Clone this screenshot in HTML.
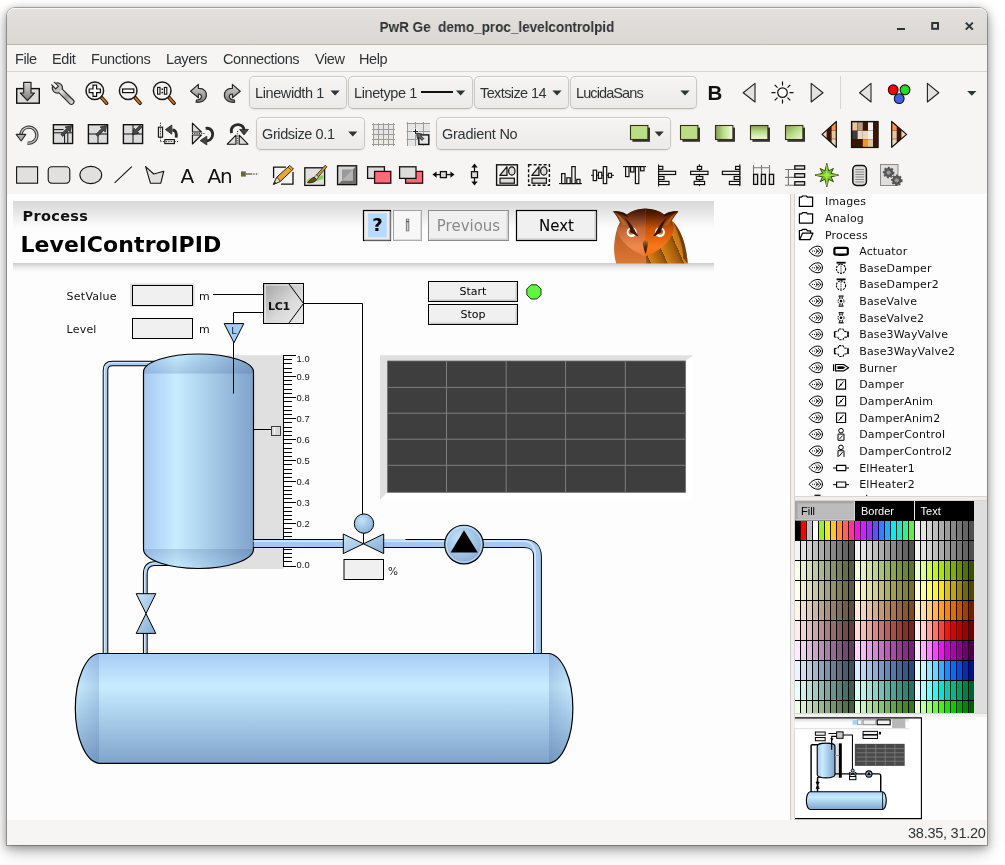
<!DOCTYPE html>
<html lang="en">
<head>
<meta charset="utf-8">
<title>PwR Ge demo_proc_levelcontrolpid</title>
<style>
html,body{margin:0;padding:0}
body{width:1005px;height:865px;overflow:hidden;background:#fff;position:relative;font-family:"Liberation Sans","DejaVu Sans",sans-serif;color:#2e3436}
.abs{position:absolute}
#win{position:absolute;left:7px;top:8px;width:980px;height:837px;background:#f6f5f4;border-radius:8px 8px 0 0;box-shadow:0 0 0 1px rgba(0,0,0,.27),0 2px 9px 1px rgba(0,0,0,.32),0 7px 18px 0 rgba(0,0,0,.22)}
#title{position:absolute;left:7px;top:8px;width:980px;height:36px;border-radius:8px 8px 0 0;background:linear-gradient(#e3e0dd,#dbd7d3);border-bottom:1px solid #bdb6af;box-shadow:inset 0 1px rgba(255,255,255,.75)}
#title span{position:absolute;left:0;right:0;top:9.5px;text-align:center;font-weight:bold;font-size:15px;line-height:18px;white-space:pre;color:#2e3436;transform:scaleX(.9)}
#menubar{position:absolute;left:7px;top:45px;width:980px;height:26px;background:#f6f5f4;border-bottom:1px solid #dad6d2}
.mi{position:absolute;top:50px;font-size:14.5px;line-height:18px;letter-spacing:-.4px;white-space:pre;color:#2e3436}
.btn{position:absolute;height:31px;border:1px solid #cdc7c2;border-bottom-color:#bfb8b1;border-radius:5px;background:linear-gradient(to top,#edebe9 2px,#f6f5f4);box-shadow:inset 0 1px rgba(255,255,255,.8),0 1px 2px rgba(0,0,0,.07)}
.bt{position:absolute;font-size:14.5px;line-height:18px;letter-spacing:-.4px;white-space:pre;color:#2e3436}
#canvasbg{position:absolute;left:7px;top:194px;width:783px;height:626px;background:#fdfdfd}
#vsep{position:absolute;left:790px;top:194px;width:3px;height:626px;background:#f1efed;border-left:1px solid #cfcac5;border-right:1px solid #d9d5d1}
#tree{position:absolute;left:795px;top:194px;width:192px;height:302px;background:#fdfdfd;overflow:hidden}
#hsep1{position:absolute;left:795px;top:496px;width:192px;height:3px;background:#f1efed;border-top:1px solid #d9d5d1;border-bottom:1px solid #d9d5d1}
#palbg{position:absolute;left:795px;top:501px;width:192px;height:212px;background:#dedede}
#hsep2{position:absolute;left:795px;top:713px;width:192px;height:3px;background:#f4f2f0;border-top:1px solid #d9d5d1;border-bottom:1px solid #e4e1de}
#navbg{position:absolute;left:795px;top:717px;width:192px;height:103px;background:#fdfdfd}
#status{position:absolute;left:7px;top:820px;width:980px;height:25px;background:#f6f5f4}
#status span{position:absolute;right:1px;top:4px;font-size:14.5px;line-height:18px;letter-spacing:-.25px;white-space:pre;color:#2e3436}
svg{position:absolute;left:0;top:0;will-change:transform}
.mi,.bt,#title span,#status span{will-change:transform}
svg text{font-family:"DejaVu Sans","Liberation Sans",sans-serif}
svg text.ls,svg .ls text{font-family:"Liberation Sans","DejaVu Sans",sans-serif}
svg .crisp{shape-rendering:crispEdges}
</style>
</head>
<body>
<div id="win"></div>
<div id="title"><span>PwR Ge  demo_proc_levelcontrolpid</span></div>
<div id="menubar"></div>
<div class="mi" style="left:15px">File</div>
<div class="mi" style="left:52px">Edit</div>
<div class="mi" style="left:91px">Functions</div>
<div class="mi" style="left:166px">Layers</div>
<div class="mi" style="left:223px">Connections</div>
<div class="mi" style="left:315px">View</div>
<div class="mi" style="left:359px">Help</div>
<div class="btn" style="left:249px;top:76px;width:96px"></div>
<div class="btn" style="left:348px;top:76px;width:122.5px"></div>
<div class="btn" style="left:474px;top:76px;width:92.5px"></div>
<div class="btn" style="left:570px;top:76px;width:125px"></div>
<div class="btn" style="left:256px;top:117px;width:106.6px"></div>
<div class="btn" style="left:436px;top:117px;width:233px"></div>
<div class="bt" style="left:255px;top:84px">Linewidth 1</div>
<div class="bt" style="left:354px;top:84px">Linetype 1</div>
<div class="bt" style="left:480px;top:84px;letter-spacing:-.6px">Textsize 14</div>
<div class="bt" style="left:576px;top:84px;letter-spacing:-.9px">LucidaSans</div>
<div class="bt" style="left:262px;top:125px">Gridsize 0.1</div>
<div class="bt" style="left:442px;top:125px;letter-spacing:-.25px">Gradient No</div>
<div id="canvasbg"></div>
<div id="vsep"></div>
<div id="tree"></div>
<div id="hsep1"></div>
<div id="palbg"></div>
<div id="hsep2"></div>
<div id="navbg"></div>
<div id="status"><span>38.35, 31.20</span></div>
<svg width="1005" height="865" viewBox="0 0 1005 865">
<defs>
<linearGradient id="gArrow" x1="0" y1="0" x2="0" y2="1"><stop offset="0" stop-color="#d8d8d8"/><stop offset="1" stop-color="#7a7a7a"/></linearGradient>
<linearGradient id="gWr" x1="0" y1="0" x2="1" y2="1"><stop offset="0" stop-color="#e8e8e8"/><stop offset=".5" stop-color="#9a9a9a"/><stop offset="1" stop-color="#d0d0d0"/></linearGradient>
<linearGradient id="gGreenH" x1="0" y1="0" x2="1" y2="0"><stop offset="0" stop-color="#7f9e55"/><stop offset=".45" stop-color="#b9de86"/><stop offset="1" stop-color="#f4fbe8"/></linearGradient>
<linearGradient id="gGreenV" x1="0" y1="0" x2="0" y2="1"><stop offset="0" stop-color="#7f9e55"/><stop offset=".45" stop-color="#b9de86"/><stop offset="1" stop-color="#f4fbe8"/></linearGradient>
<linearGradient id="gGreenD" x1="0" y1="0" x2="1" y2="1"><stop offset="0" stop-color="#7f9e55"/><stop offset=".5" stop-color="#b9de86"/><stop offset="1" stop-color="#eef8dc"/></linearGradient>
<filter id="sh" x="-20%" y="-20%" width="150%" height="150%"><feGaussianBlur stdDeviation=".6"/></filter>
</defs>
<!-- ===== ROW 1 ===== -->
<!-- save/import -->
<g>
<rect x="16.7" y="88.6" width="22.6" height="14.6" fill="#dcdcdc" stroke="#111" stroke-width="1.4"/>
<path d="M23.7 82.3H31V93h3.4l-7 7.6-7-7.6h3.3z" fill="url(#gArrow)" stroke="#222" stroke-width="1.2" stroke-linejoin="round"/>
</g>
<!-- wrench -->
<g>
<path d="M61 91.4L71.4 101.8" stroke="#2a2a2a" stroke-width="6.2" stroke-linecap="round" fill="none"/>
<circle cx="57.4" cy="88" r="5.7" fill="#2a2a2a"/>
<path d="M61 91.4L71.4 101.8" stroke="url(#gWr)" stroke-width="4" stroke-linecap="round" fill="none"/>
<circle cx="57.4" cy="88" r="4.5" fill="#c2c2c2"/>
<path d="M58.6 86L53.3 80.7L50.2 83.8L55.5 89.1z" fill="#f6f5f4"/>
<path d="M53.9 81.9L58.4 86.2L55.7 88.9L51.4 84.5" fill="none" stroke="#2a2a2a" stroke-width="1.1"/>
</g>
<!-- zoom in -->
<g>
<path d="M101.3 97.3 L106.6 103.2" stroke="#1a1a1a" stroke-width="3.6" stroke-linecap="round"/>
<path d="M101.8 97.8 L106.4 103" stroke="#e8720c" stroke-width="1.8" stroke-linecap="round"/>
<circle cx="94.8" cy="90.8" r="8.8" fill="#f4f4f4" stroke="#1a1a1a" stroke-width="1.5"/>
<path d="M93 85.2h3.6v3.8h3.8v3.6h-3.8v3.8H93v-3.8h-3.8V89H93z" fill="#fff" stroke="#111" stroke-width="1.2"/>
</g>
<!-- zoom out -->
<g>
<path d="M134.8 97.3 L140.1 103.2" stroke="#1a1a1a" stroke-width="3.6" stroke-linecap="round"/>
<path d="M135.3 97.8 L139.9 103" stroke="#e8720c" stroke-width="1.8" stroke-linecap="round"/>
<circle cx="128.2" cy="90.8" r="8.8" fill="#f4f4f4" stroke="#1a1a1a" stroke-width="1.5"/>
<rect x="122.6" y="89" width="11.2" height="3.6" fill="#fff" stroke="#111" stroke-width="1.2"/>
</g>
<!-- zoom reset -->
<g>
<path d="M168.8 97.3 L174.1 103.2" stroke="#1a1a1a" stroke-width="3.6" stroke-linecap="round"/>
<path d="M169.3 97.8 L173.9 103" stroke="#e8720c" stroke-width="1.8" stroke-linecap="round"/>
<circle cx="162.2" cy="90.8" r="8.8" fill="#f4f4f4" stroke="#1a1a1a" stroke-width="1.5"/>
<rect x="157.6" y="87.4" width="2.4" height="6.8" fill="#fff" stroke="#111" stroke-width="1.1"/>
<rect x="164.4" y="87.4" width="2.4" height="6.8" fill="#fff" stroke="#111" stroke-width="1.1"/>
<rect x="161.5" y="88.4" width="1.4" height="1.6" fill="#111"/><rect x="161.5" y="91.8" width="1.4" height="1.6" fill="#111"/>
</g>
<!-- undo -->
<path d="M190.6 91.2 L198.4 84.4 V88.4 C204.4 88.2 207 92 206.4 96.2 C205.8 100.4 201.4 102.8 196.2 102.2 L196.4 100 C199.4 100 201.4 98.6 201.4 96.6 C201.4 94.8 200.2 94 198.4 94 V97.8 Z" fill="url(#gArrow)" stroke="#2a2a2a" stroke-width="1.2" stroke-linejoin="round"/>
<!-- redo -->
<path d="M240.2 91.2 L232.4 84.4 V88.4 C226.4 88.2 223.8 92 224.4 96.2 C225 100.4 229.4 102.8 234.6 102.2 L234.4 100 C231.4 100 229.4 98.6 229.4 96.6 C229.4 94.8 230.6 94 232.4 94 V97.8 Z" fill="url(#gArrow)" stroke="#2a2a2a" stroke-width="1.2" stroke-linejoin="round"/>
<!-- combo arrows + linetype sample -->
<g fill="#2e3436">
<path d="M330.5 90.6h9.2l-4.6 5z"/>
<path d="M456 90.6h9.2l-4.6 5z"/>
<path d="M552.4 90.6h9.2l-4.6 5z"/>
<path d="M680.4 90.6h9.2l-4.6 5z"/>
<path d="M348.2 131.6h9.2l-4.6 5z"/>
<path d="M654.6 131.6h9.2l-4.6 5z"/>
<path d="M967.2 91h9.2l-4.6 4.8z"/>
</g>
<rect x="421" y="91" width="32" height="2" fill="#111"/>
<!-- B, triangles, sun -->
<text class="ls" x="707.6" y="100.4" font-weight="bold" font-size="20.5" fill="#111">B</text>
<g fill="#e2e2e2" stroke="#222" stroke-width="1.1" stroke-linejoin="round">
<path d="M755 83.4V102L743.2 92.7z"/>
<path d="M811.2 83.4V102L823 92.7z"/>
<path d="M871 83.4V102L859.6 92.7z"/>
<path d="M927.4 83.4V102L938.8 92.7z"/>
</g>
<g stroke="#111" stroke-width="1.2" fill="none">
<circle cx="782.5" cy="92.6" r="4.8" fill="#fff"/>
<path d="M782.5 81.6v4M782.5 99.6v4M771.5 92.6h4M789.5 92.6h4M774.7 84.8l2.8 2.8M787.5 97.6l2.8 2.8M790.3 84.8l-2.8 2.8M777.5 97.6l-2.8 2.8"/>
</g>
<rect x="840" y="76" width="1" height="33" fill="#d9d5d1"/>
<g stroke="#111" stroke-width="1.1">
<circle cx="893.2" cy="89.8" r="4.9" fill="#f00"/>
<circle cx="905" cy="89.8" r="4.9" fill="#1ee01e"/>
<circle cx="899.2" cy="98.6" r="4.9" fill="#4060f0"/>
</g>
<!-- ===== ROW 2 ===== -->
<!-- rotate ccw -->
<g>
<path d="M21.5 138.2 A8 8 0 1 1 27.4 143" fill="none" stroke="#2a2a2a" stroke-width="3.2"/>
<path d="M21.5 138.2 A8 8 0 1 1 27.4 143" fill="none" stroke="#c8c8c8" stroke-width="1.3"/>
<path d="M16.2 134.4h9.6l-4.6 6.6z" fill="#b0b0b0" stroke="#2a2a2a" stroke-width="1.1" stroke-linejoin="round"/>
</g>
<!-- box icons -->
<g stroke="#111" fill="none">
<rect x="53.4" y="124.7" width="19.2" height="18.8" fill="#dcdcdc" stroke-width="1.4"/>
<path d="M53.4 129.6H63.6M53.4 132.8H72.6M64.6 132.8V143.5M67.8 132.8V143.5" stroke-width="1"/>
<rect x="88.4" y="124.7" width="19.2" height="18.8" fill="#dcdcdc" stroke-width="1.4"/>
<path d="M88.4 134H98M98 134V143.5M98 134H107.6" stroke-width="1"/>
<rect x="123.4" y="124.7" width="19.2" height="18.8" fill="#dcdcdc" stroke-width="1.4"/>
<path d="M123.4 134H142.6M133 124.7V143.5" stroke-width="1"/>
</g>
<g fill="#4a4a4a" stroke="#1c1c1c" stroke-width=".7" stroke-linejoin="round">
<path d="M60.81 134.41L66.71 128.51L65.15 126.95L71.6 125.6L70.25 132.05L68.69 130.49L62.79 136.39z"/>
<path d="M95.81 134.41L101.71 128.51L100.15 126.95L106.6 125.6L105.25 132.05L103.69 130.49L97.79 136.39z"/>
<path d="M140.01 125.21L135.5 129.72L133.94 128.16L132.6 134.6L139.04 133.26L137.48 131.7L141.99 127.19z"/>
</g>
<!-- rotate 90 -->
<g>
<rect x="158.4" y="127.2" width="4.2" height="10" fill="#e4e4e4" stroke="#111" stroke-width="1.1"/>
<rect x="164.8" y="139.6" width="9.6" height="4" fill="#e4e4e4" stroke="#111" stroke-width="1.1"/>
<path d="M160.5 122.8V127M160.5 137.4V142M160.5 141.6H165M174.6 141.6H179.4M160.5 128.5V136.5M166 141.6H173.4" stroke="#111" stroke-width="1" stroke-dasharray="1 1.4" fill="none"/>
<path d="M172.4 130 C176.4 130.4 176.6 134 176.2 137.6" fill="none" stroke="#2a2a2a" stroke-width="2.8"/>
<path d="M165.4 129.6l6.4-4.6v9.2z" fill="#444" stroke="#222" stroke-width=".8" stroke-linejoin="round"/>
</g>
<!-- flip -->
<g>
<path d="M192.4 123.2V132H201.4z" fill="#dcdcdc" stroke="#111" stroke-width="1.1" stroke-linejoin="round"/>
<path d="M192.4 144V135H201.4z" fill="#dcdcdc" stroke="#111" stroke-width="1.1" stroke-linejoin="round"/>
<path d="M192 133.5H205.5" stroke="#111" stroke-width="1" stroke-dasharray="1 1.3"/>
<path d="M205.6 128.4 C211.4 127.4 213.6 132.6 212.2 136.6 C211.2 139.4 209 140.8 206.6 140.8" fill="none" stroke="#2a2a2a" stroke-width="2.8"/>
<path d="M200.2 140.6l6.6-4.4v8.8z" fill="#444" stroke="#222" stroke-width=".8" stroke-linejoin="round"/>
</g>
<!-- mirror -->
<g>
<path d="M227.2 144.2H236V135.2z" fill="#dcdcdc" stroke="#111" stroke-width="1.1" stroke-linejoin="round"/>
<path d="M248 144.2H239.2V135.2z" fill="#dcdcdc" stroke="#111" stroke-width="1.1" stroke-linejoin="round"/>
<path d="M237.6 131V145" stroke="#111" stroke-width="1" stroke-dasharray="1 1.3"/>
<path d="M231.6 133.2 C230 128 234 124 238.6 124.6 C242 125 243.8 127.4 244 130" fill="none" stroke="#2a2a2a" stroke-width="2.8"/>
<path d="M239.6 129.4h8.8l-4.4 5.6z" fill="#444" stroke="#222" stroke-width=".8" stroke-linejoin="round"/>
</g>
<!-- grid icons -->
<g>
<rect x="373" y="124" width="21" height="21" fill="#e6e6e6"/>
<rect x="373" y="140" width="21" height="5" fill="#ecece0"/>
<path d="M372 124.5H395M372 129.5H395M372 134.5H395M372 139.5H395M372 144.5H395M373.5 123V146M378.5 123V146M383.5 123V146M388.5 123V146M393.5 123V146" stroke="#9c9c9c" stroke-width="1" fill="none"/>
<rect x="407" y="123" width="23" height="23" fill="#e6e6e6"/>
<path d="M406.5 123.5H430M406.5 131.5H430M406.5 139.5H430M407.5 122V146M415.5 122V146M423.5 122V146" stroke="#9c9c9c" stroke-width="1" fill="none"/>
<path d="M412.5 131.5h6M415.5 128.5v6" stroke="#fff" stroke-width="2.6"/>
<path d="M413 131.5h5M415.5 129v5" stroke="#222" stroke-width="1"/>
<rect x="418.8" y="134.9" width="10" height="9.5" fill="#e6e6e6" stroke="#111" stroke-width="1.4"/>
<path d="M416.6 133l5.4 1-1.4 1.4 3.2 3.2-1.8 1.8-3.2-3.2-1.4 1.4z" fill="#666" stroke="#222" stroke-width=".8" stroke-linejoin="round"/>
</g>
<!-- green squares -->
<g>
<rect x="632.4" y="127.6" width="17.6" height="14.2" fill="#333" filter="url(#sh)"/>
<rect x="630.5" y="125.5" width="17.4" height="14" fill="#b9de86" stroke="#3a3010" stroke-width="1.1"/>
<rect x="682.4" y="127.6" width="17.6" height="14.2" fill="#333" filter="url(#sh)"/>
<rect x="680.5" y="125.5" width="17.4" height="14" fill="#b9de86" stroke="#3a3010" stroke-width="1.1"/>
<rect x="717.4" y="127.6" width="17.6" height="14.2" fill="#333" filter="url(#sh)"/>
<rect x="715.5" y="125.5" width="17.4" height="14" fill="url(#gGreenH)" stroke="#3a3010" stroke-width="1.1"/>
<rect x="752.4" y="127.6" width="17.6" height="14.2" fill="#333" filter="url(#sh)"/>
<rect x="750.5" y="125.5" width="17.4" height="14" fill="url(#gGreenV)" stroke="#3a3010" stroke-width="1.1"/>
<rect x="787.4" y="127.6" width="17.6" height="14.2" fill="#333" filter="url(#sh)"/>
<rect x="785.5" y="125.5" width="17.4" height="14" fill="url(#gGreenD)" stroke="#3a3010" stroke-width="1.1"/>
</g>
<!-- colour theme selector -->
<g>
<clipPath id="cpL"><path d="M836.3 121.5V147.3L822 134.4z"/></clipPath>
<g clip-path="url(#cpL)">
<rect x="820" y="121" width="17" height="27" fill="#3c1404"/>
<rect x="831.6" y="121" width="5" height="9" fill="#ff9040"/>
<rect x="831.6" y="130.4" width="5" height="8.4" fill="#e8c896"/>
<rect x="831.6" y="139.2" width="5" height="9" fill="#ecd8b0"/>
<rect x="820" y="130" width="6.6" height="9" fill="#ead8c0"/>
</g>
<path d="M836.3 121.5V147.3L822 134.4z" fill="none" stroke="#111" stroke-width="1.2" stroke-linejoin="round"/>
<rect x="851.5" y="121.5" width="26.6" height="26" fill="#3c1404" stroke="#111" stroke-width="1.2"/>
<rect x="852.4" y="122.4" width="5" height="8.2" fill="#e8c896"/>
<rect x="857.6" y="122.4" width="5.2" height="8.2" fill="#b49a88"/>
<rect x="868" y="122.4" width="5" height="8.2" fill="#f2f2f2"/>
<rect x="852.4" y="130.8" width="5" height="8.2" fill="#3a3c40"/>
<rect x="857.6" y="130.8" width="5.2" height="8.2" fill="#e8d8c8"/>
<rect x="862.8" y="130.8" width="5.2" height="8.2" fill="#ead8c0"/>
<rect x="868" y="130.8" width="5" height="8.2" fill="#f0f0f0"/>
<rect x="862.8" y="139.2" width="5.2" height="7.6" fill="#f09820"/>
<rect x="868" y="139.2" width="5" height="7.6" fill="#d8c8a0"/>
<clipPath id="cpR"><path d="M891.7 121.5V147.3L906.6 134.4z"/></clipPath>
<g clip-path="url(#cpR)">
<rect x="891" y="121" width="17" height="27" fill="#3c1404"/>
<rect x="891.7" y="121" width="5" height="9" fill="#ff9040"/>
<rect x="891.7" y="130.4" width="5" height="8.4" fill="#e8c896"/>
<rect x="891.7" y="139.2" width="5" height="9" fill="#ecd8b0"/>
<rect x="901.4" y="130" width="6.6" height="9" fill="#ead8c0"/>
</g>
<path d="M891.7 121.5V147.3L906.6 134.4z" fill="none" stroke="#111" stroke-width="1.2" stroke-linejoin="round"/>
</g>
<!-- ===== ROW 3 ===== -->
<g stroke="#111" stroke-width="1.1" fill="#e0e0e0">
<rect x="16.6" y="166.8" width="21" height="16.4"/>
<rect x="48.2" y="166.8" width="21.6" height="16.4" rx="3.6"/>
<ellipse cx="90.8" cy="175" rx="10.9" ry="8.6"/>
<path d="M114.6 182.8L131.8 166.6" fill="none"/>
<path d="M145.6 166.6L153.8 174L163.8 171.2L160.8 183.2H150.4z" stroke-linejoin="round"/>
</g>
<text x="180.6" y="183.2" font-size="20" fill="#111">A</text>
<text x="207.6" y="183.2" font-size="20" letter-spacing="-1.3" fill="#111">An</text>
<!-- connection -->
<g>
<rect x="241" y="171.4" width="4.8" height="5.2" fill="#6b6640"/>
<path d="M245.8 174H252.2" stroke="#6b6640" stroke-width="1.4"/>
<path d="M253.2 174H258.6" stroke="#6b6640" stroke-width="1.4" stroke-dasharray="1.4 1.2"/>
</g>
<!-- pencil (border) -->
<g>
<path d="M273.6 178V167.2H286M293 172V184.2H281" fill="none" stroke="#111" stroke-width="1.3"/>
<path d="M273.4 184.4L276.8 177.2L289.8 165.4L293.4 169L280.4 181.4z" fill="#e8a82c" stroke="#222" stroke-width="1" stroke-linejoin="round"/>
<path d="M273.4 184.4L276.8 177.2L280.4 181.4z" fill="#f0e0c0" stroke="#222" stroke-width=".8" stroke-linejoin="round"/>
<path d="M273.4 184.4l1.4-2.8 1.8 1.8z" fill="#222"/>
<path d="M288 167l3.6 3.6" stroke="#7a5a10" stroke-width="1"/>
</g>
<!-- brush (fill) -->
<g>
<rect x="304.8" y="167.8" width="19.8" height="17.6" fill="#e0e0e0" stroke="#111" stroke-width="1.3"/>
<path d="M306.6 181.4 C309 176.6 313 178.4 316.4 177 C319 176 321.4 174.6 323.6 175.8 L323.4 178.8 C320 180.4 316 181 312 182.8 C309.6 183.6 307.6 183 306.6 181.4z" fill="#8fd048"/>
<path d="M316.4 175L325.2 165.2L327 166.8L318.4 176.8z" fill="#c89838" stroke="#333" stroke-width=".9" stroke-linejoin="round"/>
<path d="M314.2 177.2l2.4-2.2 2 2-2 2.4z" fill="#d8d8d8" stroke="#333" stroke-width=".8"/>
<path d="M307.4 182.6 C309.4 181.8 310.6 178.2 314 177.2 L316.6 179.6 C315.4 182.2 310.8 183.4 307.4 182.6z" fill="#6a4a20" stroke="#2a1a08" stroke-width=".8" stroke-linejoin="round"/>
</g>
<!-- 3d box -->
<g>
<rect x="337.6" y="165.8" width="19" height="18.8" fill="#d4d4d4" stroke="#111" stroke-width="1.4"/>
<path d="M338.4 184l3.6-3.6h10.8v-11l3.4-3.4v18z" fill="#707070"/>
<rect x="342" y="169.4" width="10.8" height="11" fill="#9a9a9a"/>
<path d="M342 180.4l10.8-11v11z" fill="#b4b4b4"/>
</g>
<!-- overlap icons -->
<g stroke="#111" stroke-width="1.3">
<rect x="367.6" y="166.8" width="16.8" height="11.6" fill="#dcdcdc"/>
<rect x="374.6" y="171.4" width="16.2" height="11.8" fill="#ff6a78"/>
<rect x="405.6" y="171.4" width="17" height="11.8" fill="#ff6a78"/>
<rect x="399.6" y="166.8" width="16.4" height="11.6" fill="#dcdcdc"/>
</g>
<!-- h / v scale arrows -->
<g stroke="#111" stroke-width="1.3" fill="#dcdcdc">
<path d="M435 174.6H452" fill="none"/>
<path d="M432.4 174.6l4.2-3.2v6.4zM454.6 174.6l-4.2-3.2v6.4z" fill="#111" stroke="none"/>
<rect x="440.4" y="171.6" width="6" height="6"/>
<path d="M474.5 166V183" fill="none"/>
<path d="M474.5 163.4l-3.2 4.2h6.4zM474.5 185.6l-3.2-4.2h6.4z" fill="#111" stroke="none"/>
<rect x="471.5" y="171.7" width="6" height="6"/>
</g>
<!-- group / ungroup -->
<g stroke="#111" fill="#dcdcdc" stroke-width="1.2">
<rect x="496.6" y="164.8" width="20.8" height="20.4" fill="#f6f5f4" stroke-width="1.4"/>
<path d="M499.8 175.4H507V166.6z" stroke-linejoin="round"/>
<ellipse cx="511.8" cy="171" rx="3.2" ry="4.2"/>
<rect x="500" y="178.2" width="14.4" height="5"/>
<rect x="528.6" y="164.8" width="20.8" height="20.4" fill="#f6f5f4" stroke-width="1.4" stroke-dasharray="3 2"/>
<path d="M531.8 175.4H539V166.6z" stroke-linejoin="round"/>
<ellipse cx="543.8" cy="171" rx="3.2" ry="4.2"/>
<rect x="532" y="178.2" width="14.4" height="5"/>
</g>
<!-- align icons -->
<g stroke="#111" fill="#f6f5f4" stroke-width="1.2">
<path d="M559 183.6H582" fill="none" stroke-width="1"/>
<rect x="561.6" y="173.6" width="3.4" height="10"/><rect x="566.8" y="177.8" width="3.4" height="5.8"/><rect x="571.8" y="166.6" width="3.4" height="17"/><rect x="576.8" y="179.4" width="3.2" height="4.2"/>
<path d="M591 175.3H614" fill="none" stroke-width="1"/>
<rect x="593.2" y="170.2" width="3.4" height="10.4"/><rect x="598.4" y="172.2" width="3.4" height="6.2"/><rect x="603.3" y="166.6" width="3.4" height="17"/><rect x="608.3" y="173.3" width="3.2" height="4.2"/>
<path d="M623 166.6H646" fill="none" stroke-width="1"/>
<rect x="625.6" y="166.6" width="3.4" height="10"/><rect x="630.6" y="166.6" width="3.4" height="5.4"/><rect x="635.4" y="166.6" width="3.4" height="17"/><rect x="640.6" y="166.6" width="3.4" height="4.2"/>
<path d="M658.6 164.4V186.4" fill="none" stroke-width="1"/>
<rect x="658.6" y="166.4" width="4.2" height="3"/><rect x="658.6" y="171.3" width="17" height="3.2"/><rect x="658.6" y="176.5" width="5.4" height="3"/><rect x="658.6" y="181.4" width="10.4" height="3.2"/>
<path d="M699.4 164.2V186.2" fill="none" stroke-width="1"/>
<rect x="697.4" y="166.4" width="4.2" height="3"/><rect x="690.6" y="171.3" width="17.4" height="3.2"/><rect x="696.4" y="176.5" width="6.4" height="3"/><rect x="694.2" y="181.4" width="10.4" height="3.2"/>
<path d="M739.8 164.2V186.2" fill="none" stroke-width="1"/>
<rect x="735.6" y="166.4" width="4.2" height="3"/><rect x="722.4" y="171.3" width="17.4" height="3.2"/><rect x="734.2" y="176.5" width="5.6" height="3"/><rect x="729.4" y="181.4" width="10.4" height="3.2"/>
</g>
<!-- equidistance -->
<g>
<path d="M753.5 165V174M761.5 165V174M769.5 165V174M753.5 167.7H769.5M785 169.5H795M785 177.4H795M785 185.3H795M788.4 169.5V185.3" stroke="#777" stroke-width="1.1" fill="none"/>
<g stroke="#111" stroke-width="1.3" fill="#e4e4e4">
<rect x="753.6" y="174.4" width="4" height="10"/><rect x="761.4" y="174.4" width="4" height="10"/><rect x="769.4" y="174.4" width="4.2" height="10"/>
<rect x="794.8" y="165.8" width="9.8" height="3.4"/><rect x="794.8" y="173.7" width="9.8" height="3.6"/><rect x="794.8" y="181.7" width="9.8" height="3.4"/>
</g>
</g>
<!-- star -->
<path d="M826.8 163.3L828.6 170.9L833.4 168.5L831 173.3L838.6 175.1L831 176.9L833.4 181.7L828.6 179.3L826.8 186.9L825 179.3L820.2 181.7L822.6 176.9L815 175.1L822.6 173.3L820.2 168.5L825 170.9z" fill="#78c21e" stroke="#34480c" stroke-width="1" stroke-linejoin="round"/>
<path d="M826.8 164.6V185.6M816.3 175.1H837.3" stroke="#b4ee5c" stroke-width=".9"/>
<circle cx="826.8" cy="175.1" r="2.6" fill="#a8e850" opacity=".7"/>
<!-- scroll -->
<g>
<rect x="852.8" y="165.6" width="13.6" height="19.8" rx="3.8" fill="#dcdcdc" stroke="#111" stroke-width="1.5"/>
<path d="M855.4 169.5H864M855.4 172H864M855.4 174.5H864M855.4 177H864M855.4 179.5H864M855.4 182H864" stroke="#8a8a8a" stroke-width="1"/>
</g>
<!-- gears -->
<g>
<rect x="880.5" y="164.5" width="17.5" height="21" fill="#dedede" stroke="#8a8a8a" stroke-width="1"/>
<circle cx="888.6" cy="172.6" r="4.6" fill="#555" stroke="#555" stroke-width="2.4" stroke-dasharray="1.8 1.6"/>
<circle cx="888.6" cy="172.6" r="2.1" fill="#9a9a9a"/>
<circle cx="896.8" cy="180.3" r="4.6" fill="#555" stroke="#555" stroke-width="2.4" stroke-dasharray="1.8 1.6"/>
<circle cx="896.8" cy="180.3" r="2.1" fill="#9a9a9a"/>
</g>
<!-- ===== CANVAS ===== -->
<defs>
<linearGradient id="gHead" x1="0" y1="0" x2="0" y2="1"><stop offset="0" stop-color="#d8d8d8"/><stop offset=".18" stop-color="#e6e6e6"/><stop offset=".36" stop-color="#f7f7f7"/><stop offset=".46" stop-color="#fdfdfd"/><stop offset="1" stop-color="#fdfdfd"/></linearGradient>
<linearGradient id="gHead2" x1="0" y1="0" x2="0" y2="1"><stop offset="0" stop-color="#cccccc"/><stop offset=".5" stop-color="#ececec"/><stop offset="1" stop-color="#fdfdfd"/></linearGradient>
<linearGradient id="gTankV" x1="0" y1="0" x2="1" y2="0"><stop offset="0" stop-color="#a6caf2"/><stop offset=".3" stop-color="#c8ecff"/><stop offset=".62" stop-color="#a6cbe8"/><stop offset="1" stop-color="#7fa3cb"/></linearGradient>
<linearGradient id="gTankH" x1="0" y1="0" x2="0" y2="1"><stop offset="0" stop-color="#a8ccf4"/><stop offset=".3" stop-color="#c8ecff"/><stop offset=".62" stop-color="#a6cbe8"/><stop offset="1" stop-color="#7fa3cb"/></linearGradient>
<linearGradient id="gDomeT" x1="0" y1="0" x2="0" y2="1"><stop offset="0" stop-color="#3a5f94" stop-opacity="0"/><stop offset="1" stop-color="#3a5f94" stop-opacity=".22"/></linearGradient>
<linearGradient id="gDomeB" x1="0" y1="0" x2="0" y2="1"><stop offset="0" stop-color="#3a5f94" stop-opacity=".2"/><stop offset="1" stop-color="#3a5f94" stop-opacity="0"/></linearGradient>
<linearGradient id="gCapL" x1="0" y1="0" x2="1" y2="0"><stop offset="0" stop-color="#3a5f94" stop-opacity="0"/><stop offset="1" stop-color="#3a5f94" stop-opacity=".2"/></linearGradient>
<linearGradient id="gCapR" x1="0" y1="0" x2="1" y2="0"><stop offset="0" stop-color="#3a5f94" stop-opacity=".2"/><stop offset="1" stop-color="#3a5f94" stop-opacity="0"/></linearGradient>
<linearGradient id="gLC" x1="0" y1="0" x2="1" y2="1"><stop offset="0" stop-color="#a2a2a2"/><stop offset=".55" stop-color="#d8d8d8"/><stop offset="1" stop-color="#ececec"/></linearGradient>
<linearGradient id="gValve" x1="0" y1="0" x2="1" y2="1"><stop offset="0" stop-color="#c8e6fc"/><stop offset="1" stop-color="#86abd4"/></linearGradient>
<radialGradient id="gPump" cx=".4" cy=".35" r=".7"><stop offset="0" stop-color="#c4e4fb"/><stop offset="1" stop-color="#86abd4"/></radialGradient>
<clipPath id="cpTank"><path d="M143.5 372A55 18 0 0 1 253.5 372V549A55 19.5 0 0 1 143.5 549z"/></clipPath>
<clipPath id="cpBig"><path d="M98.8 653.5H549A25.4 55 0 0 1 549 763.3H98.8A25 55 0 0 1 98.8 653.5z"/></clipPath>
</defs>
<!-- header band -->
<rect x="13" y="201" width="701" height="62" fill="url(#gHead)"/>
<rect x="13" y="263" width="701" height="9" fill="url(#gHead2)"/>
<text x="22.6" y="220.6" font-size="14.5" font-weight="bold" letter-spacing=".3" fill="#111">Process</text>
<text x="20.4" y="252" font-size="22" font-weight="bold" letter-spacing=".12" fill="#000">LevelControlPID</text>
<!-- header buttons -->
<g>
<rect x="363.5" y="210.5" width="27" height="30" fill="#ececec" stroke="#000" stroke-width="1.2"/>
<rect x="368" y="213.2" width="18.8" height="24.2" fill="#b6daff"/>
<path d="M364.6 239.8H390V211.6" fill="none" stroke="#bdbdbd" stroke-width="1.2"/>
<text x="377.4" y="231.2" font-size="18" font-weight="bold" text-anchor="middle" fill="#000">?</text>
<rect x="393.5" y="210.5" width="28" height="30" fill="#f7f7f7" stroke="#a0a0a0" stroke-width="1"/>
<path d="M394.6 239.6H420.6V211.6" fill="none" stroke="#dcdcdc" stroke-width="1.2"/>
<text x="407.6" y="230.8" font-size="15" font-weight="bold" text-anchor="middle" fill="#cccccc" stroke="#5c5c5c" stroke-width=".7">i</text>
<rect x="428.5" y="210.5" width="80" height="30" fill="#f0f0f0" stroke="#8c8c8c" stroke-width="1"/>
<path d="M429.8 239.3H507.4V211.8" fill="none" stroke="#cfcfcf" stroke-width="1.6"/>
<text x="468.5" y="230.6" font-size="15" text-anchor="middle" fill="#8a8a8a">Previous</text>
<rect x="516.5" y="210.5" width="80" height="30" fill="#f0f0f0" stroke="#000" stroke-width="1.2"/>
<path d="M517.8 239.3H595.4V211.8" fill="none" stroke="#c6c6c6" stroke-width="1.6"/>
<text x="556.5" y="230.6" font-size="15" text-anchor="middle" fill="#000">Next</text>
</g>
<!-- fields -->
<text x="66.6" y="300.2" font-size="11" letter-spacing=".25" fill="#111">SetValue</text>
<text x="66.6" y="333" font-size="11" letter-spacing=".2" fill="#111">Level</text>
<rect x="130" y="283.4" width="64.6" height="23.4" fill="#dedede"/>
<rect x="132.5" y="285.5" width="60" height="20" fill="#f0f0f0" stroke="#000" stroke-width="1"/>
<rect x="132.5" y="318.5" width="60" height="20" fill="#f0f0f0" stroke="#000" stroke-width="1"/>
<text x="199" y="300" font-size="11" fill="#111">m</text>
<text x="199" y="333" font-size="11" fill="#111">m</text>
<g fill="none" stroke="#000" stroke-width="1">
<path d="M213 294.5H264"/>
<path d="M264 312.5H233.5V324"/>
<path d="M303.5 303.5H362.5V514"/>
<path d="M233.5 342V393.5"/>
</g>
<!-- LC1 -->
<rect x="263.5" y="283.5" width="40" height="40" fill="url(#gLC)" stroke="#000" stroke-width="1"/>
<path d="M265.2 322.4V285H302.4" fill="none" stroke="#f2f2f2" stroke-width="1.2" opacity=".8"/>
<path d="M288.8 283.7L303.5 303.5L288.8 323.3" fill="none" stroke="#000" stroke-width="1"/>
<text x="268" y="310.4" font-size="11" font-weight="bold" fill="#111" letter-spacing="-.3">LC1</text>
<!-- L triangle -->
<path d="M224.2 323.6H243.8L234 342.8z" fill="#a4ccf4" stroke="#000" stroke-width="1" stroke-linejoin="round"/>
<text x="234" y="334" font-size="9.5" text-anchor="middle" fill="#223">L</text>
<!-- Start / Stop -->
<g>
<rect x="428.5" y="281.5" width="89" height="20" fill="#f0f0f0" stroke="#000" stroke-width="1"/>
<path d="M429.8 300.3H516.3V282.8" fill="none" stroke="#c8c8c8" stroke-width="1.5"/>
<text x="473" y="295" font-size="11" text-anchor="middle" fill="#000">Start</text>
<rect x="428.5" y="304.5" width="89" height="20" fill="#f0f0f0" stroke="#000" stroke-width="1"/>
<path d="M429.8 323.3H516.3V305.8" fill="none" stroke="#c8c8c8" stroke-width="1.5"/>
<text x="473" y="318.2" font-size="11" text-anchor="middle" fill="#000">Stop</text>
<path d="M531 284.8h5.8l4.2 4.2v5.8l-4.2 4.2h-5.8l-4.2-4.2v-5.8z" fill="#5ef63e" stroke="#1c3c10" stroke-width="1"/>
</g>
<!-- trend -->
<g>
<rect x="380" y="355.2" width="313.2" height="144.6" fill="#ffffff"/>
<path d="M380 355.2H693.2L685.4 361H387.6V492.3L380 499.8z" fill="#e0e0e0"/>
<rect x="387.6" y="361" width="297.8" height="131.3" fill="#3e3e3e"/>
<path d="M446.5 361V492.3M506.2 361V492.3M565.6 361V492.3M625.3 361V492.3M387.6 387.4H685.4M387.6 413.2H685.4M387.6 439.2H685.4M387.6 465.3H685.4" stroke="#7e7e7e" stroke-width="1" fill="none"/>
<rect x="387.6" y="361" width="297.8" height="131.3" fill="none" stroke="#6a6a6a" stroke-width=".8"/>
</g>
<!-- level scale background -->
<rect x="200" y="355.2" width="83.5" height="213.8" fill="#e0e0e0"/>
<!-- pipes behind tanks -->
<g fill="none" stroke-linejoin="round">
<path id="p1" d="M156 363.5H112.5Q105.5 363.5 105.5 370.5V656" stroke="#000" stroke-width="5.6"/>
<path d="M156 363.5H112.5Q105.5 363.5 105.5 370.5V656" stroke="#a6caf2" stroke-width="3.6"/>
<path d="M156 362.5H112.5Q104.5 362.5 104.5 370.5V656" stroke="#d2e8fe" stroke-width="1.2"/>
<path d="M170 563.6H155Q145.3 563.6 145.3 574V594M145.3 633V656" stroke="#000" stroke-width="4.8"/>
<path d="M170 563.6H155Q145.3 563.6 145.3 574V594M145.3 633V656" stroke="#a6caf2" stroke-width="2.8"/>
<path d="M170 562.9H155Q144.6 562.9 144.6 574V594M144.6 633V656" stroke="#d2e8fe" stroke-width="1"/>
<path d="M250 543.5H344" stroke="#000" stroke-width="8.8"/>
<path d="M250 543.5H344" stroke="#a4c8f0" stroke-width="6.8"/>
<path d="M250 541.2H344" stroke="#cfe6fe" stroke-width="1.8"/>
<path d="M383 543.5H446" stroke="#000" stroke-width="8.8"/>
<path d="M383 543.5H446" stroke="#a4c8f0" stroke-width="6.8"/>
<path d="M383 541.2H446" stroke="#cfe6fe" stroke-width="1.8"/>
<path d="M383.8 539.6H405.5" stroke="#b8d8f8" stroke-width="1.2"/>
<path d="M482 543.5H524Q537.5 543.5 537.5 557V656" stroke="#000" stroke-width="8.8"/>
<path d="M482 543.5H524Q537.5 543.5 537.5 557V656" stroke="#a4c8f0" stroke-width="6.8"/>
<path d="M482 541.2H524Q535.2 541.2 535.2 557V656" stroke="#cfe6fe" stroke-width="1.8"/>
</g>
<!-- vertical tank -->
<g>
<path d="M143.5 372A55 18 0 0 1 253.5 372V549A55 19.5 0 0 1 143.5 549z" fill="url(#gTankV)"/>
<g clip-path="url(#cpTank)">
<rect x="143" y="353" width="111" height="20.6" fill="url(#gDomeT)"/>
<rect x="143" y="549" width="111" height="20" fill="url(#gDomeB)"/>
</g>
<path d="M143.5 372A55 18 0 0 1 253.5 372V549A55 19.5 0 0 1 143.5 549z" fill="none" stroke="#000" stroke-width="1.2"/>
</g>
<path d="M233.5 342V393.5" stroke="#000" stroke-width="1" fill="none"/>
<!-- level indicator -->
<path d="M254 429.5H271.5" stroke="#000" stroke-width="1"/>
<rect x="271.5" y="426.5" width="9" height="9" fill="#d8d8d8" stroke="#3c3c3c" stroke-width="1"/>
<path d="M274.5 427V434.5" stroke="#f4f4f4" stroke-width="1.4"/>
<!-- scale -->
<path class="crisp" d="M283.5 355V567" stroke="#000" stroke-width="1"/>
<path class="crisp" d="M283 355.5H296M283 359.5H292M283 363.5H292M283 368.5H292M283 372.5H292M283 376.5H296M283 380.5H292M283 384.5H292M283 389.5H292M283 393.5H292M283 397.5H296M283 401.5H292M283 406.5H292M283 410.5H292M283 414.5H292M283 418.5H296M283 422.5H292M283 427.5H292M283 431.5H292M283 435.5H292M283 439.5H296M283 443.5H292M283 448.5H292M283 452.5H292M283 456.5H292M283 460.5H296M283 464.5H292M283 469.5H292M283 473.5H292M283 477.5H292M283 481.5H296M283 486.5H292M283 490.5H292M283 494.5H292M283 498.5H292M283 502.5H296M283 507.5H292M283 511.5H292M283 515.5H292M283 519.5H292M283 523.5H296M283 528.5H292M283 532.5H292M283 536.5H292M283 540.5H292M283 544.5H296M283 549.5H292M283 553.5H292M283 557.5H292M283 561.5H292M283 566.5H296" stroke="#000" stroke-width="1" fill="none"/>
<g class="ls" font-size="9.4" fill="#111">
<text x="296.6" y="362">1.0</text>
<text x="296.6" y="380.05">0.9</text>
<text x="296.6" y="401.1">0.8</text>
<text x="296.6" y="422.15">0.7</text>
<text x="296.6" y="443.2">0.6</text>
<text x="296.6" y="464.25">0.5</text>
<text x="296.6" y="485.3">0.4</text>
<text x="296.6" y="506.35">0.3</text>
<text x="296.6" y="527.4">0.2</text>
<text x="296.6" y="567.5">0.0</text>
</g>
<text class="ls" x="296.6" y="548.45" font-size="9.4" fill="#111">0.1</text>
<!-- outlet pipe over scale -->
<g fill="none">
<path d="M253 543.5H344" stroke="#000" stroke-width="8.8"/>
<path d="M253.6 543.5H344" stroke="#a4c8f0" stroke-width="6.8"/>
<path d="M253.6 541.2H344" stroke="#cfe6fe" stroke-width="1.8"/>
</g>
<!-- control valve -->
<g stroke="#000" stroke-width="1" stroke-linejoin="round">
<path d="M363.5 533V543.5" fill="none"/>
<circle cx="364" cy="523.6" r="9.7" fill="url(#gPump)"/>
<path d="M343.3 534V553.6L363.5 543.8zM383.7 534V553.6L363.5 543.8z" fill="url(#gValve)"/>
</g>
<rect x="344" y="559.5" width="39.5" height="20" fill="#f0f0f0" stroke="#000" stroke-width="1"/>
<text x="388" y="574.6" font-size="10.5" fill="#222">%</text>
<!-- pump -->
<circle cx="464" cy="544.6" r="19.3" fill="url(#gPump)" stroke="#000" stroke-width="1.1"/>
<circle cx="464" cy="544.6" r="17.6" fill="none" stroke="#d6ecfe" stroke-width="1" opacity=".7"/>
<path d="M464 530.2L477.8 552.4H450.6z" fill="#000"/>
<!-- hand valve -->
<path d="M136.2 593.7H155.8L146 613.6zM136.2 633.4H155.8L146 613.6z" fill="url(#gValve)" stroke="#000" stroke-width="1" stroke-linejoin="round"/>
<!-- big tank -->
<g>
<path d="M98.8 653.5H549A25.4 55 0 0 1 549 763.3H98.8A25 55 0 0 1 98.8 653.5z" fill="url(#gTankH)"/>
<g clip-path="url(#cpBig)">
<rect x="74" y="653" width="25" height="111" fill="url(#gCapL)"/>
<rect x="549" y="653" width="25" height="111" fill="url(#gCapR)"/>
</g>
<path d="M98.8 653.5H549A25.4 55 0 0 1 549 763.3H98.8A25 55 0 0 1 98.8 653.5z" fill="none" stroke="#000" stroke-width="1.2"/>
</g>
<!-- owl -->
<defs>
<linearGradient id="owL" x1="0" y1="0" x2="0" y2="1"><stop offset="0" stop-color="#34120a"/><stop offset=".14" stop-color="#5e2810"/><stop offset=".42" stop-color="#c06432"/><stop offset=".8" stop-color="#f08a4c"/><stop offset="1" stop-color="#e87c3c"/></linearGradient>
<linearGradient id="owR" x1="0" y1="0" x2="0" y2="1"><stop offset="0" stop-color="#2e0e02"/><stop offset=".14" stop-color="#5c1e00"/><stop offset=".42" stop-color="#c85206"/><stop offset=".8" stop-color="#fa7818"/><stop offset="1" stop-color="#f07010"/></linearGradient>
<linearGradient id="owBodyL" x1="0" y1="0" x2="0" y2="1"><stop offset="0" stop-color="#9a4c1c"/><stop offset="1" stop-color="#e27834"/></linearGradient>
<linearGradient id="owWing" x1="0" y1="0" x2="1" y2=".35" spreadMethod="repeat" gradientUnits="userSpaceOnUse" x2u="0"><stop offset="0" stop-color="#e89a18"/><stop offset="1" stop-color="#8a4604"/></linearGradient>
<linearGradient id="owWing2" gradientUnits="userSpaceOnUse" x1="646" y1="252" x2="660" y2="246" spreadMethod="repeat"><stop offset="0" stop-color="#d88414"/><stop offset=".8" stop-color="#a05c0a"/><stop offset="1" stop-color="#824404"/></linearGradient>
<linearGradient id="owBeak" x1="0" y1="0" x2="0" y2="1"><stop offset="0" stop-color="#c8781c"/><stop offset=".5" stop-color="#5a3008"/><stop offset="1" stop-color="#1a0c02"/></linearGradient>
<clipPath id="owClip"><path d="M616.2 263.6C614 256 613.6 248 614.6 241C615.4 234 617.2 227 620 222.5C618 218 615.6 214.4 612.8 211.6C618 210.8 623.4 212 626.6 214.4C632 210.6 638.6 208.5 645.3 208.5C652 208.5 659 210.6 664.4 214.4C667.8 211.8 673.4 210.8 678.7 211.5C676 214.4 673.6 217.6 672 220.6C678.4 227 682.6 236 684.8 245C686.4 251.6 687.4 258 687.8 263.6z"/></clipPath>
</defs>
<g clip-path="url(#owClip)">
<rect x="610" y="206" width="35.3" height="60" fill="url(#owBodyL)"/>
<rect x="645.3" y="206" width="45" height="60" fill="url(#owWing2)"/>
<!-- right body dark shade at far right -->
<path d="M673 222C680 236 683.4 250 683 258L688 263.6V236z" fill="#4a2002" opacity=".6"/>
<!-- face mask -->
<path d="M612 209L627 214C633 210 639 208 645.3 208V256.6C634 252 622 244 617.5 232C616.4 228 617.6 224 620 222z" fill="url(#owL)"/>
<path d="M679.4 209L664 214C658 210 652 208 645.3 208V256.6C657 252 669 244 673.4 232C674.4 228 673.6 224 671.6 221z" fill="url(#owR)"/>
<path d="M612.8 211.6C618 210.8 623.4 212 626.6 214.4L628 217C623 214.6 618 213 612.8 211.6z" fill="#2e1208"/>
<path d="M678.7 211.5C673.4 210.8 667.8 211.8 664.4 214.4L663.4 217C668.4 214.6 673.4 213 678.7 211.5z" fill="#2e1004"/>
<!-- ears inner highlight -->
<path d="M614.6 212.4C620 215 624.6 220 627.6 226L622.6 225C621 220 618 215.6 614.6 212.4z" fill="#b46a1c"/>
<path d="M677 212.4C671.6 215 667 220 664 226L669 225C670.6 220 673.6 215.6 677 212.4z" fill="#a85c14"/>
</g>
<!-- eyes -->
<circle cx="631.7" cy="232.2" r="5" fill="#fff"/>
<circle cx="659.9" cy="232.2" r="5" fill="#fff"/>
<circle cx="631.3" cy="231.7" r="2.8" fill="#c87408"/>
<circle cx="660.3" cy="231.7" r="2.8" fill="#c87408"/>
<circle cx="631.3" cy="231.4" r="1.3" fill="#3a1a02"/>
<circle cx="660.3" cy="231.4" r="1.3" fill="#3a1a02"/>
<path d="M624.6 217.6C628.6 221 632.4 225.6 634.4 229.6C635.6 232 637 234.4 638.6 236.2C635.6 235.6 632.6 233.8 630.8 231.4C629.4 227 627.2 222 624.6 217.6z" fill="#3a1606"/>
<path d="M667 217.6C663 221 659.2 225.6 657.2 229.6C656 232 654.6 234.4 653 236.2C656 235.6 659 233.8 660.8 231.4C662.2 227 664.4 222 667 217.6z" fill="#3a1202"/>
<!-- beak -->
<path d="M642.8 243C643.6 240.6 644.6 239.4 645.4 239.4C646.4 239.4 647.4 240.6 648 243C647.6 247 646.6 251 645.6 254C644.4 251 643.2 247 642.8 243z" fill="url(#owBeak)"/>
<!-- ===== TREE ===== -->
<g stroke-linejoin="round">
<path d="M799.4 206.4V197.2H801.6L802.6 196H806.4L807.4 197.2H812.6V206.4z" fill="#fff" stroke="#000" stroke-width="1.2"/>
<text x="825" y="205.2" font-size="11" letter-spacing=".15" fill="#111">Images</text>
<path d="M799.4 223.05V213.85H801.6L802.6 212.65H806.4L807.4 213.85H812.6V223.05z" fill="#fff" stroke="#000" stroke-width="1.2"/>
<text x="825" y="221.85" font-size="11" letter-spacing=".15" fill="#111">Analog</text>
<path d="M799.4 239.7V230.5H801.6L802.6 229.3H806.4L807.4 230.9H810.6V233.1" fill="#fff" stroke="#000" stroke-width="1.2"/><path d="M799.6 239.7L802.6 233.1H813L810 239.7z" fill="#fff" stroke="#000" stroke-width="1.2"/>
<text x="825" y="238.5" font-size="11" letter-spacing=".15" fill="#111">Process</text>
<path d="M809.2 251.15C811.4 248.15 814.4 246.15 818 246.15C821 246.15 822.4 248.35 822.4 251.15C822.4 253.95 821 256.15 818 256.15C814.4 256.15 811.4 254.15 809.2 251.15z" fill="#fff" stroke="#000" stroke-width="1"/><path d="M812 251.15H823.4" stroke="#000" stroke-width="1" stroke-dasharray="1 1" fill="none"/><path d="M815.4 248.55L818 251.15L815.4 253.75M818 247.95L820.8 251.15L818 254.35" stroke="#000" stroke-width=".9" fill="none"/>
<rect x="834.4" y="247.95" width="13.4" height="6.6" rx="1.6" fill="#fff" stroke="#000" stroke-width="2.2"/><rect x="838.6" y="254.75" width="5" height="1.2" fill="#000"/>
<text x="859.2" y="255.15" font-size="11" letter-spacing=".15" fill="#111">Actuator</text>
<path d="M809.2 267.8C811.4 264.8 814.4 262.8 818 262.8C821 262.8 822.4 265 822.4 267.8C822.4 270.6 821 272.8 818 272.8C814.4 272.8 811.4 270.8 809.2 267.8z" fill="#fff" stroke="#000" stroke-width="1"/><path d="M812 267.8H823.4" stroke="#000" stroke-width="1" stroke-dasharray="1 1" fill="none"/><path d="M815.4 265.2L818 267.8L815.4 270.4M818 264.6L820.8 267.8L818 271" stroke="#000" stroke-width=".9" fill="none"/>
<rect x="836.6" y="261.8" width="9" height="1.8" fill="#000"/><path d="M841 263.6V272.8" stroke="#000" stroke-width="1" stroke-dasharray="1 1"/><circle cx="841" cy="268.8" r="4.6" fill="none" stroke="#000" stroke-width="1.1" stroke-dasharray="2 1"/>
<text x="859.2" y="271.8" font-size="11" letter-spacing=".15" fill="#111">BaseDamper</text>
<path d="M809.2 284.45C811.4 281.45 814.4 279.45 818 279.45C821 279.45 822.4 281.65 822.4 284.45C822.4 287.25 821 289.45 818 289.45C814.4 289.45 811.4 287.45 809.2 284.45z" fill="#fff" stroke="#000" stroke-width="1"/><path d="M812 284.45H823.4" stroke="#000" stroke-width="1" stroke-dasharray="1 1" fill="none"/><path d="M815.4 281.85L818 284.45L815.4 287.05M818 281.25L820.8 284.45L818 287.65" stroke="#000" stroke-width=".9" fill="none"/>
<rect x="836.6" y="278.45" width="9" height="1.8" fill="#000"/><path d="M841 280.25V289.45" stroke="#000" stroke-width="1" stroke-dasharray="1 1"/><circle cx="841" cy="285.45" r="4.6" fill="none" stroke="#000" stroke-width="1.1" stroke-dasharray="2 1"/>
<text x="859.2" y="288.45" font-size="11" letter-spacing=".15" fill="#111">BaseDamper2</text>
<path d="M809.2 301.1C811.4 298.1 814.4 296.1 818 296.1C821 296.1 822.4 298.3 822.4 301.1C822.4 303.9 821 306.1 818 306.1C814.4 306.1 811.4 304.1 809.2 301.1z" fill="#fff" stroke="#000" stroke-width="1"/><path d="M812 301.1H823.4" stroke="#000" stroke-width="1" stroke-dasharray="1 1" fill="none"/><path d="M815.4 298.5L818 301.1L815.4 303.7M818 297.9L820.8 301.1L818 304.3" stroke="#000" stroke-width=".9" fill="none"/>
<rect x="838.6" y="295.5" width="5" height="1.2" fill="#000"/><rect x="838.6" y="305.5" width="5" height="1.2" fill="#000"/><path d="M839.4 296.7L842.6 305.5M842.6 296.7L839.4 305.5" stroke="#000" stroke-width=".9"/><circle cx="841" cy="301.1" r="3" fill="#fff" stroke="#000" stroke-width="1" stroke-dasharray="1.4 1"/><circle cx="841" cy="301.1" r="1.3" fill="#000"/>
<text x="859.2" y="305.1" font-size="11" letter-spacing=".15" fill="#111">BaseValve</text>
<path d="M809.2 317.75C811.4 314.75 814.4 312.75 818 312.75C821 312.75 822.4 314.95 822.4 317.75C822.4 320.55 821 322.75 818 322.75C814.4 322.75 811.4 320.75 809.2 317.75z" fill="#fff" stroke="#000" stroke-width="1"/><path d="M812 317.75H823.4" stroke="#000" stroke-width="1" stroke-dasharray="1 1" fill="none"/><path d="M815.4 315.15L818 317.75L815.4 320.35M818 314.55L820.8 317.75L818 320.95" stroke="#000" stroke-width=".9" fill="none"/>
<rect x="838.6" y="312.15" width="5" height="1.2" fill="#000"/><rect x="838.6" y="322.15" width="5" height="1.2" fill="#000"/><path d="M839.4 313.35L842.6 322.15M842.6 313.35L839.4 322.15" stroke="#000" stroke-width=".9"/><circle cx="841" cy="317.75" r="3" fill="#fff" stroke="#000" stroke-width="1" stroke-dasharray="1.4 1"/><circle cx="841" cy="317.75" r="1.3" fill="#000"/>
<text x="859.2" y="321.75" font-size="11" letter-spacing=".15" fill="#111">BaseValve2</text>
<path d="M809.2 334.4C811.4 331.4 814.4 329.4 818 329.4C821 329.4 822.4 331.6 822.4 334.4C822.4 337.2 821 339.4 818 339.4C814.4 339.4 811.4 337.4 809.2 334.4z" fill="#fff" stroke="#000" stroke-width="1"/><path d="M812 334.4H823.4" stroke="#000" stroke-width="1" stroke-dasharray="1 1" fill="none"/><path d="M815.4 331.8L818 334.4L815.4 337M818 331.2L820.8 334.4L818 337.6" stroke="#000" stroke-width=".9" fill="none"/>
<path d="M839 329H843L844 331.4L848 331.8V337L844 337.4L843 339.8H839L838 337.4L834.6 337V331.8L838 331.4z" fill="#fff" stroke="#000" stroke-width="1.1" stroke-dasharray="2.4 1"/><path d="M834.6 331.8V337M848 331.8V337" stroke="#000" stroke-width="1.4"/>
<text x="859.2" y="338.4" font-size="11" letter-spacing=".15" fill="#111">Base3WayValve</text>
<path d="M809.2 351.05C811.4 348.05 814.4 346.05 818 346.05C821 346.05 822.4 348.25 822.4 351.05C822.4 353.85 821 356.05 818 356.05C814.4 356.05 811.4 354.05 809.2 351.05z" fill="#fff" stroke="#000" stroke-width="1"/><path d="M812 351.05H823.4" stroke="#000" stroke-width="1" stroke-dasharray="1 1" fill="none"/><path d="M815.4 348.45L818 351.05L815.4 353.65M818 347.85L820.8 351.05L818 354.25" stroke="#000" stroke-width=".9" fill="none"/>
<path d="M839 345.65H843L844 348.05L848 348.45V353.65L844 354.05L843 356.45H839L838 354.05L834.6 353.65V348.45L838 348.05z" fill="#fff" stroke="#000" stroke-width="1.1" stroke-dasharray="2.4 1"/><path d="M834.6 348.45V353.65M848 348.45V353.65" stroke="#000" stroke-width="1.4"/>
<text x="859.2" y="355.05" font-size="11" letter-spacing=".15" fill="#111">Base3WayValve2</text>
<path d="M809.2 367.7C811.4 364.7 814.4 362.7 818 362.7C821 362.7 822.4 364.9 822.4 367.7C822.4 370.5 821 372.7 818 372.7C814.4 372.7 811.4 370.7 809.2 367.7z" fill="#fff" stroke="#000" stroke-width="1"/><path d="M812 367.7H823.4" stroke="#000" stroke-width="1" stroke-dasharray="1 1" fill="none"/><path d="M815.4 365.1L818 367.7L815.4 370.3M818 364.5L820.8 367.7L818 370.9" stroke="#000" stroke-width=".9" fill="none"/>
<path d="M833.6 364.3V371.1" stroke="#000" stroke-width="1.3"/><path d="M835.6 364.5H843.6L848.6 367.7L843.6 370.9H835.6z" fill="#fff" stroke="#000" stroke-width="1.2"/><path d="M837.4 366.3H843L845.4 367.7L843 369.1H837.4z" fill="#000"/>
<text x="859.2" y="371.7" font-size="11" letter-spacing=".15" fill="#111">Burner</text>
<path d="M809.2 384.35C811.4 381.35 814.4 379.35 818 379.35C821 379.35 822.4 381.55 822.4 384.35C822.4 387.15 821 389.35 818 389.35C814.4 389.35 811.4 387.35 809.2 384.35z" fill="#fff" stroke="#000" stroke-width="1"/><path d="M812 384.35H823.4" stroke="#000" stroke-width="1" stroke-dasharray="1 1" fill="none"/><path d="M815.4 381.75L818 384.35L815.4 386.95M818 381.15L820.8 384.35L818 387.55" stroke="#000" stroke-width=".9" fill="none"/>
<rect x="836.6" y="379.75" width="9" height="9.4" fill="#fff" stroke="#000" stroke-width="1.1"/><path d="M838.6 387.35L843.6 381.55" stroke="#000" stroke-width="1"/><circle cx="841" cy="384.55" r=".9" fill="#000"/>
<text x="859.2" y="388.35" font-size="11" letter-spacing=".15" fill="#111">Damper</text>
<path d="M809.2 401C811.4 398 814.4 396 818 396C821 396 822.4 398.2 822.4 401C822.4 403.8 821 406 818 406C814.4 406 811.4 404 809.2 401z" fill="#fff" stroke="#000" stroke-width="1"/><path d="M812 401H823.4" stroke="#000" stroke-width="1" stroke-dasharray="1 1" fill="none"/><path d="M815.4 398.4L818 401L815.4 403.6M818 397.8L820.8 401L818 404.2" stroke="#000" stroke-width=".9" fill="none"/>
<rect x="836.6" y="396.4" width="9" height="9.4" fill="#fff" stroke="#000" stroke-width="1.1"/><path d="M838.6 404L843.6 398.2" stroke="#000" stroke-width="1"/><circle cx="841" cy="401.2" r=".9" fill="#000"/>
<text x="859.2" y="405" font-size="11" letter-spacing=".15" fill="#111">DamperAnim</text>
<path d="M809.2 417.65C811.4 414.65 814.4 412.65 818 412.65C821 412.65 822.4 414.85 822.4 417.65C822.4 420.45 821 422.65 818 422.65C814.4 422.65 811.4 420.65 809.2 417.65z" fill="#fff" stroke="#000" stroke-width="1"/><path d="M812 417.65H823.4" stroke="#000" stroke-width="1" stroke-dasharray="1 1" fill="none"/><path d="M815.4 415.05L818 417.65L815.4 420.25M818 414.45L820.8 417.65L818 420.85" stroke="#000" stroke-width=".9" fill="none"/>
<rect x="836.6" y="413.05" width="9" height="9.4" fill="#fff" stroke="#000" stroke-width="1.1"/><path d="M838.6 420.65L843.6 414.85" stroke="#000" stroke-width="1"/><circle cx="841" cy="417.85" r=".9" fill="#000"/>
<text x="859.2" y="421.65" font-size="11" letter-spacing=".15" fill="#111">DamperAnim2</text>
<path d="M809.2 434.3C811.4 431.3 814.4 429.3 818 429.3C821 429.3 822.4 431.5 822.4 434.3C822.4 437.1 821 439.3 818 439.3C814.4 439.3 811.4 437.3 809.2 434.3z" fill="#fff" stroke="#000" stroke-width="1"/><path d="M812 434.3H823.4" stroke="#000" stroke-width="1" stroke-dasharray="1 1" fill="none"/><path d="M815.4 431.7L818 434.3L815.4 436.9M818 431.1L820.8 434.3L818 437.5" stroke="#000" stroke-width=".9" fill="none"/>
<circle cx="841" cy="430.7" r="2.3" fill="#fff" stroke="#000" stroke-width="1"/><rect x="838" y="434.1" width="6" height="6.2" fill="#fff" stroke="#000" stroke-width="1"/><path d="M839.4 439.1L842.6 435.5" stroke="#000" stroke-width=".9"/>
<text x="859.2" y="438.3" font-size="11" letter-spacing=".15" fill="#111">DamperControl</text>
<path d="M809.2 450.95C811.4 447.95 814.4 445.95 818 445.95C821 445.95 822.4 448.15 822.4 450.95C822.4 453.75 821 455.95 818 455.95C814.4 455.95 811.4 453.95 809.2 450.95z" fill="#fff" stroke="#000" stroke-width="1"/><path d="M812 450.95H823.4" stroke="#000" stroke-width="1" stroke-dasharray="1 1" fill="none"/><path d="M815.4 448.35L818 450.95L815.4 453.55M818 447.75L820.8 450.95L818 454.15" stroke="#000" stroke-width=".9" fill="none"/>
<circle cx="841" cy="447.35" r="2.3" fill="#fff" stroke="#000" stroke-width="1"/><path d="M838 456.95V450.75H844V456.95M839 456.35L842.6 452.15" fill="none" stroke="#000" stroke-width="1"/>
<text x="859.2" y="454.95" font-size="11" letter-spacing=".15" fill="#111">DamperControl2</text>
<path d="M809.2 467.6C811.4 464.6 814.4 462.6 818 462.6C821 462.6 822.4 464.8 822.4 467.6C822.4 470.4 821 472.6 818 472.6C814.4 472.6 811.4 470.6 809.2 467.6z" fill="#fff" stroke="#000" stroke-width="1"/><path d="M812 467.6H823.4" stroke="#000" stroke-width="1" stroke-dasharray="1 1" fill="none"/><path d="M815.4 465L818 467.6L815.4 470.2M818 464.4L820.8 467.6L818 470.8" stroke="#000" stroke-width=".9" fill="none"/>
<path d="M833 468H849" stroke="#000" stroke-width="1"/><rect x="836.6" y="465.4" width="9.2" height="5.2" fill="#fff" stroke="#000" stroke-width="1.1"/>
<text x="859.2" y="471.6" font-size="11" letter-spacing=".15" fill="#111">ElHeater1</text>
<path d="M809.2 484.25C811.4 481.25 814.4 479.25 818 479.25C821 479.25 822.4 481.45 822.4 484.25C822.4 487.05 821 489.25 818 489.25C814.4 489.25 811.4 487.25 809.2 484.25z" fill="#fff" stroke="#000" stroke-width="1"/><path d="M812 484.25H823.4" stroke="#000" stroke-width="1" stroke-dasharray="1 1" fill="none"/><path d="M815.4 481.65L818 484.25L815.4 486.85M818 481.05L820.8 484.25L818 487.45" stroke="#000" stroke-width=".9" fill="none"/>
<path d="M833 484.65H849" stroke="#000" stroke-width="1"/><rect x="836.6" y="482.05" width="9.2" height="5.2" fill="#fff" stroke="#000" stroke-width="1.1"/>
<text x="859.2" y="488.25" font-size="11" letter-spacing=".15" fill="#111">ElHeater2</text>
<rect x="814.5" y="494.6" width="6" height="1.4" fill="#222"/><rect x="866" y="494.8" width="1.2" height="1.2" fill="#222"/>
</g>
<!-- ===== PALETTE ===== -->
<rect x="795" y="501" width="179" height="212" fill="#000"/>
<rect x="801" y="521" width="5" height="19" fill="#ff0000"/>
<rect x="807" y="521" width="5" height="19" fill="#c0c0c0"/>
<rect x="813" y="521" width="5" height="19" fill="#ffffff"/>
<rect x="819" y="521" width="5" height="19" fill="#a0f020"/>
<rect x="825" y="521" width="5" height="19" fill="#e8f010"/>
<rect x="831" y="521" width="5" height="19" fill="#ffc820"/>
<rect x="837" y="521" width="5" height="19" fill="#ff9030"/>
<rect x="843" y="521" width="5" height="19" fill="#ff6060"/>
<rect x="849" y="521" width="5" height="19" fill="#ff30a0"/>
<rect x="855" y="521" width="5" height="19" fill="#f010e0"/>
<rect x="861" y="521" width="5" height="19" fill="#d020ff"/>
<rect x="867" y="521" width="5" height="19" fill="#a030f0"/>
<rect x="873" y="521" width="5" height="19" fill="#6050f0"/>
<rect x="879" y="521" width="5" height="19" fill="#3080ff"/>
<rect x="885" y="521" width="5" height="19" fill="#20b0f0"/>
<rect x="891" y="521" width="5" height="19" fill="#00f0f0"/>
<rect x="897" y="521" width="5" height="19" fill="#20e8c0"/>
<rect x="903" y="521" width="5" height="19" fill="#30f090"/>
<rect x="909" y="521" width="5" height="19" fill="#60f040"/>
<rect x="915" y="521" width="5" height="19" fill="#f4f4f4"/>
<rect x="921" y="521" width="5" height="19" fill="#e2e2e2"/>
<rect x="927" y="521" width="5" height="19" fill="#d0d0d0"/>
<rect x="933" y="521" width="5" height="19" fill="#bebebe"/>
<rect x="939" y="521" width="5" height="19" fill="#acacac"/>
<rect x="945" y="521" width="5" height="19" fill="#9a9a9a"/>
<rect x="951" y="521" width="5" height="19" fill="#888888"/>
<rect x="957" y="521" width="5" height="19" fill="#767676"/>
<rect x="963" y="521" width="5" height="19" fill="#646464"/>
<rect x="969" y="521" width="5" height="19" fill="#505050"/>
<rect x="795" y="541" width="5" height="19" fill="#f4f4f4"/>
<rect x="801" y="541" width="5" height="19" fill="#e2e2e2"/>
<rect x="807" y="541" width="5" height="19" fill="#d0d0d0"/>
<rect x="813" y="541" width="5" height="19" fill="#bebebe"/>
<rect x="819" y="541" width="5" height="19" fill="#acacac"/>
<rect x="825" y="541" width="5" height="19" fill="#9a9a9a"/>
<rect x="831" y="541" width="5" height="19" fill="#888888"/>
<rect x="837" y="541" width="5" height="19" fill="#767676"/>
<rect x="843" y="541" width="5" height="19" fill="#646464"/>
<rect x="849" y="541" width="5" height="19" fill="#505050"/>
<rect x="855" y="541" width="5" height="19" fill="#f4f4f4"/>
<rect x="861" y="541" width="5" height="19" fill="#e2e2e2"/>
<rect x="867" y="541" width="5" height="19" fill="#d0d0d0"/>
<rect x="873" y="541" width="5" height="19" fill="#bebebe"/>
<rect x="879" y="541" width="5" height="19" fill="#acacac"/>
<rect x="885" y="541" width="5" height="19" fill="#9a9a9a"/>
<rect x="891" y="541" width="5" height="19" fill="#888888"/>
<rect x="897" y="541" width="5" height="19" fill="#767676"/>
<rect x="903" y="541" width="5" height="19" fill="#646464"/>
<rect x="909" y="541" width="5" height="19" fill="#505050"/>
<rect x="915" y="541" width="5" height="19" fill="#f4f4f4"/>
<rect x="921" y="541" width="5" height="19" fill="#e2e2e2"/>
<rect x="927" y="541" width="5" height="19" fill="#d0d0d0"/>
<rect x="933" y="541" width="5" height="19" fill="#bebebe"/>
<rect x="939" y="541" width="5" height="19" fill="#acacac"/>
<rect x="945" y="541" width="5" height="19" fill="#9a9a9a"/>
<rect x="951" y="541" width="5" height="19" fill="#888888"/>
<rect x="957" y="541" width="5" height="19" fill="#767676"/>
<rect x="963" y="541" width="5" height="19" fill="#646464"/>
<rect x="969" y="541" width="5" height="19" fill="#505050"/>
<rect x="795" y="561" width="5" height="19" fill="#faffeb"/>
<rect x="801" y="561" width="5" height="19" fill="#e6edd3"/>
<rect x="807" y="561" width="5" height="19" fill="#d3dbbd"/>
<rect x="813" y="561" width="5" height="19" fill="#c0c9a7"/>
<rect x="819" y="561" width="5" height="19" fill="#aeb693"/>
<rect x="825" y="561" width="5" height="19" fill="#9ba47f"/>
<rect x="831" y="561" width="5" height="19" fill="#89926d"/>
<rect x="837" y="561" width="5" height="19" fill="#77805c"/>
<rect x="843" y="561" width="5" height="19" fill="#656e4c"/>
<rect x="849" y="561" width="5" height="19" fill="#545c3d"/>
<rect x="855" y="561" width="5" height="19" fill="#f5ffd9"/>
<rect x="861" y="561" width="5" height="19" fill="#e3f0bd"/>
<rect x="867" y="561" width="5" height="19" fill="#d1e0a2"/>
<rect x="873" y="561" width="5" height="19" fill="#bfd18a"/>
<rect x="879" y="561" width="5" height="19" fill="#aec274"/>
<rect x="885" y="561" width="5" height="19" fill="#9eb25f"/>
<rect x="891" y="561" width="5" height="19" fill="#8ea34d"/>
<rect x="897" y="561" width="5" height="19" fill="#7e943c"/>
<rect x="903" y="561" width="5" height="19" fill="#6f852e"/>
<rect x="909" y="561" width="5" height="19" fill="#607521"/>
<rect x="915" y="561" width="5" height="19" fill="#f2ffc8"/>
<rect x="921" y="561" width="5" height="19" fill="#e4ff88"/>
<rect x="927" y="561" width="5" height="19" fill="#d4fa48"/>
<rect x="933" y="561" width="5" height="19" fill="#c8f214"/>
<rect x="939" y="561" width="5" height="19" fill="#b2e200"/>
<rect x="945" y="561" width="5" height="19" fill="#9cc800"/>
<rect x="951" y="561" width="5" height="19" fill="#84ac00"/>
<rect x="957" y="561" width="5" height="19" fill="#6c8e00"/>
<rect x="963" y="561" width="5" height="19" fill="#547000"/>
<rect x="969" y="561" width="5" height="19" fill="#3c5000"/>
<rect x="795" y="581" width="5" height="19" fill="#fffeeb"/>
<rect x="801" y="581" width="5" height="19" fill="#edecd3"/>
<rect x="807" y="581" width="5" height="19" fill="#dbdabd"/>
<rect x="813" y="581" width="5" height="19" fill="#c9c7a7"/>
<rect x="819" y="581" width="5" height="19" fill="#b6b593"/>
<rect x="825" y="581" width="5" height="19" fill="#a4a37f"/>
<rect x="831" y="581" width="5" height="19" fill="#92916d"/>
<rect x="837" y="581" width="5" height="19" fill="#807f5c"/>
<rect x="843" y="581" width="5" height="19" fill="#6e6d4c"/>
<rect x="849" y="581" width="5" height="19" fill="#5c5b3d"/>
<rect x="855" y="581" width="5" height="19" fill="#fffed9"/>
<rect x="861" y="581" width="5" height="19" fill="#f0eebd"/>
<rect x="867" y="581" width="5" height="19" fill="#e0dea2"/>
<rect x="873" y="581" width="5" height="19" fill="#d1cf8a"/>
<rect x="879" y="581" width="5" height="19" fill="#c2bf74"/>
<rect x="885" y="581" width="5" height="19" fill="#b2b05f"/>
<rect x="891" y="581" width="5" height="19" fill="#a3a04d"/>
<rect x="897" y="581" width="5" height="19" fill="#94913c"/>
<rect x="903" y="581" width="5" height="19" fill="#85822e"/>
<rect x="909" y="581" width="5" height="19" fill="#757221"/>
<rect x="915" y="581" width="5" height="19" fill="#ffffd0"/>
<rect x="921" y="581" width="5" height="19" fill="#ffff98"/>
<rect x="927" y="581" width="5" height="19" fill="#ffff60"/>
<rect x="933" y="581" width="5" height="19" fill="#fff828"/>
<rect x="939" y="581" width="5" height="19" fill="#f8e800"/>
<rect x="945" y="581" width="5" height="19" fill="#dcc800"/>
<rect x="951" y="581" width="5" height="19" fill="#bca800"/>
<rect x="957" y="581" width="5" height="19" fill="#988800"/>
<rect x="963" y="581" width="5" height="19" fill="#746800"/>
<rect x="969" y="581" width="5" height="19" fill="#504800"/>
<rect x="795" y="601" width="5" height="19" fill="#fff5eb"/>
<rect x="801" y="601" width="5" height="19" fill="#ede0d3"/>
<rect x="807" y="601" width="5" height="19" fill="#dbccbd"/>
<rect x="813" y="601" width="5" height="19" fill="#c9b8a7"/>
<rect x="819" y="601" width="5" height="19" fill="#b6a593"/>
<rect x="825" y="601" width="5" height="19" fill="#a4927f"/>
<rect x="831" y="601" width="5" height="19" fill="#92806d"/>
<rect x="837" y="601" width="5" height="19" fill="#806e5c"/>
<rect x="843" y="601" width="5" height="19" fill="#6e5d4c"/>
<rect x="849" y="601" width="5" height="19" fill="#5c4c3d"/>
<rect x="855" y="601" width="5" height="19" fill="#ffecd9"/>
<rect x="861" y="601" width="5" height="19" fill="#f0d6bd"/>
<rect x="867" y="601" width="5" height="19" fill="#e0c1a2"/>
<rect x="873" y="601" width="5" height="19" fill="#d1ae8a"/>
<rect x="879" y="601" width="5" height="19" fill="#c29b74"/>
<rect x="885" y="601" width="5" height="19" fill="#b2895f"/>
<rect x="891" y="601" width="5" height="19" fill="#a3784d"/>
<rect x="897" y="601" width="5" height="19" fill="#94683c"/>
<rect x="903" y="601" width="5" height="19" fill="#85592e"/>
<rect x="909" y="601" width="5" height="19" fill="#754b21"/>
<rect x="915" y="601" width="5" height="19" fill="#fff0d0"/>
<rect x="921" y="601" width="5" height="19" fill="#ffe0a0"/>
<rect x="927" y="601" width="5" height="19" fill="#ffd070"/>
<rect x="933" y="601" width="5" height="19" fill="#ffb840"/>
<rect x="939" y="601" width="5" height="19" fill="#ffa010"/>
<rect x="945" y="601" width="5" height="19" fill="#f08800"/>
<rect x="951" y="601" width="5" height="19" fill="#d87000"/>
<rect x="957" y="601" width="5" height="19" fill="#c05800"/>
<rect x="963" y="601" width="5" height="19" fill="#a04000"/>
<rect x="969" y="601" width="5" height="19" fill="#702000"/>
<rect x="795" y="621" width="5" height="19" fill="#ffebeb"/>
<rect x="801" y="621" width="5" height="19" fill="#edd4d3"/>
<rect x="807" y="621" width="5" height="19" fill="#dbbebd"/>
<rect x="813" y="621" width="5" height="19" fill="#c9a8a7"/>
<rect x="819" y="621" width="5" height="19" fill="#b69493"/>
<rect x="825" y="621" width="5" height="19" fill="#a4817f"/>
<rect x="831" y="621" width="5" height="19" fill="#926e6d"/>
<rect x="837" y="621" width="5" height="19" fill="#805d5c"/>
<rect x="843" y="621" width="5" height="19" fill="#6e4d4c"/>
<rect x="849" y="621" width="5" height="19" fill="#5c3e3d"/>
<rect x="855" y="621" width="5" height="19" fill="#ffdad9"/>
<rect x="861" y="621" width="5" height="19" fill="#f0bebd"/>
<rect x="867" y="621" width="5" height="19" fill="#e0a4a2"/>
<rect x="873" y="621" width="5" height="19" fill="#d18c8a"/>
<rect x="879" y="621" width="5" height="19" fill="#c27674"/>
<rect x="885" y="621" width="5" height="19" fill="#b2625f"/>
<rect x="891" y="621" width="5" height="19" fill="#a3504d"/>
<rect x="897" y="621" width="5" height="19" fill="#943f3c"/>
<rect x="903" y="621" width="5" height="19" fill="#85302e"/>
<rect x="909" y="621" width="5" height="19" fill="#752421"/>
<rect x="915" y="621" width="5" height="19" fill="#fff0f0"/>
<rect x="921" y="621" width="5" height="19" fill="#ffd0d0"/>
<rect x="927" y="621" width="5" height="19" fill="#ffa0a0"/>
<rect x="933" y="621" width="5" height="19" fill="#ff7070"/>
<rect x="939" y="621" width="5" height="19" fill="#ff4040"/>
<rect x="945" y="621" width="5" height="19" fill="#ff1010"/>
<rect x="951" y="621" width="5" height="19" fill="#e00000"/>
<rect x="957" y="621" width="5" height="19" fill="#c00000"/>
<rect x="963" y="621" width="5" height="19" fill="#a00000"/>
<rect x="969" y="621" width="5" height="19" fill="#700000"/>
<rect x="795" y="641" width="5" height="19" fill="#ffebff"/>
<rect x="801" y="641" width="5" height="19" fill="#edd3ed"/>
<rect x="807" y="641" width="5" height="19" fill="#dbbddb"/>
<rect x="813" y="641" width="5" height="19" fill="#c9a7c9"/>
<rect x="819" y="641" width="5" height="19" fill="#b693b6"/>
<rect x="825" y="641" width="5" height="19" fill="#a47fa4"/>
<rect x="831" y="641" width="5" height="19" fill="#926d92"/>
<rect x="837" y="641" width="5" height="19" fill="#805c80"/>
<rect x="843" y="641" width="5" height="19" fill="#6e4c6e"/>
<rect x="849" y="641" width="5" height="19" fill="#5c3d5c"/>
<rect x="855" y="641" width="5" height="19" fill="#ffd9ff"/>
<rect x="861" y="641" width="5" height="19" fill="#f0bdf0"/>
<rect x="867" y="641" width="5" height="19" fill="#e0a2e0"/>
<rect x="873" y="641" width="5" height="19" fill="#d18ad1"/>
<rect x="879" y="641" width="5" height="19" fill="#c274c2"/>
<rect x="885" y="641" width="5" height="19" fill="#b25fb2"/>
<rect x="891" y="641" width="5" height="19" fill="#a34da3"/>
<rect x="897" y="641" width="5" height="19" fill="#943c94"/>
<rect x="903" y="641" width="5" height="19" fill="#852e85"/>
<rect x="909" y="641" width="5" height="19" fill="#752175"/>
<rect x="915" y="641" width="5" height="19" fill="#ffe8ff"/>
<rect x="921" y="641" width="5" height="19" fill="#ffb0ff"/>
<rect x="927" y="641" width="5" height="19" fill="#ff80ff"/>
<rect x="933" y="641" width="5" height="19" fill="#ff40ff"/>
<rect x="939" y="641" width="5" height="19" fill="#f010f0"/>
<rect x="945" y="641" width="5" height="19" fill="#d000d0"/>
<rect x="951" y="641" width="5" height="19" fill="#b000b0"/>
<rect x="957" y="641" width="5" height="19" fill="#900090"/>
<rect x="963" y="641" width="5" height="19" fill="#700070"/>
<rect x="969" y="641" width="5" height="19" fill="#480048"/>
<rect x="795" y="661" width="5" height="19" fill="#ebf4ff"/>
<rect x="801" y="661" width="5" height="19" fill="#d3dfed"/>
<rect x="807" y="661" width="5" height="19" fill="#bdcbdb"/>
<rect x="813" y="661" width="5" height="19" fill="#a7b7c9"/>
<rect x="819" y="661" width="5" height="19" fill="#93a3b6"/>
<rect x="825" y="661" width="5" height="19" fill="#7f91a4"/>
<rect x="831" y="661" width="5" height="19" fill="#6d7e92"/>
<rect x="837" y="661" width="5" height="19" fill="#5c6d80"/>
<rect x="843" y="661" width="5" height="19" fill="#4c5c6e"/>
<rect x="849" y="661" width="5" height="19" fill="#3d4b5c"/>
<rect x="855" y="661" width="5" height="19" fill="#d9ebff"/>
<rect x="861" y="661" width="5" height="19" fill="#bed5f0"/>
<rect x="867" y="661" width="5" height="19" fill="#a5c1e0"/>
<rect x="873" y="661" width="5" height="19" fill="#8eadd1"/>
<rect x="879" y="661" width="5" height="19" fill="#799bc2"/>
<rect x="885" y="661" width="5" height="19" fill="#6589b2"/>
<rect x="891" y="661" width="5" height="19" fill="#5379a3"/>
<rect x="897" y="661" width="5" height="19" fill="#436994"/>
<rect x="903" y="661" width="5" height="19" fill="#355a85"/>
<rect x="909" y="661" width="5" height="19" fill="#284c75"/>
<rect x="915" y="661" width="5" height="19" fill="#e8ffff"/>
<rect x="921" y="661" width="5" height="19" fill="#c0f8ff"/>
<rect x="927" y="661" width="5" height="19" fill="#90e8ff"/>
<rect x="933" y="661" width="5" height="19" fill="#60d8ff"/>
<rect x="939" y="661" width="5" height="19" fill="#30b0ff"/>
<rect x="945" y="661" width="5" height="19" fill="#1090ff"/>
<rect x="951" y="661" width="5" height="19" fill="#0070f0"/>
<rect x="957" y="661" width="5" height="19" fill="#0050d8"/>
<rect x="963" y="661" width="5" height="19" fill="#0030b0"/>
<rect x="969" y="661" width="5" height="19" fill="#001080"/>
<rect x="795" y="681" width="5" height="19" fill="#ebfffc"/>
<rect x="801" y="681" width="5" height="19" fill="#d3ede9"/>
<rect x="807" y="681" width="5" height="19" fill="#bddbd6"/>
<rect x="813" y="681" width="5" height="19" fill="#a7c9c3"/>
<rect x="819" y="681" width="5" height="19" fill="#93b6b1"/>
<rect x="825" y="681" width="5" height="19" fill="#7fa49e"/>
<rect x="831" y="681" width="5" height="19" fill="#6d928c"/>
<rect x="837" y="681" width="5" height="19" fill="#5c807a"/>
<rect x="843" y="681" width="5" height="19" fill="#4c6e68"/>
<rect x="849" y="681" width="5" height="19" fill="#3d5c57"/>
<rect x="855" y="681" width="5" height="19" fill="#d9fff9"/>
<rect x="861" y="681" width="5" height="19" fill="#bdf0e7"/>
<rect x="867" y="681" width="5" height="19" fill="#a2e0d6"/>
<rect x="873" y="681" width="5" height="19" fill="#8ad1c5"/>
<rect x="879" y="681" width="5" height="19" fill="#74c2b5"/>
<rect x="885" y="681" width="5" height="19" fill="#5fb2a5"/>
<rect x="891" y="681" width="5" height="19" fill="#4da395"/>
<rect x="897" y="681" width="5" height="19" fill="#3c9485"/>
<rect x="903" y="681" width="5" height="19" fill="#2e8576"/>
<rect x="909" y="681" width="5" height="19" fill="#217567"/>
<rect x="915" y="681" width="5" height="19" fill="#e8ffff"/>
<rect x="921" y="681" width="5" height="19" fill="#b0ffff"/>
<rect x="927" y="681" width="5" height="19" fill="#70ffff"/>
<rect x="933" y="681" width="5" height="19" fill="#30f8f0"/>
<rect x="939" y="681" width="5" height="19" fill="#00e8d0"/>
<rect x="945" y="681" width="5" height="19" fill="#00d0a8"/>
<rect x="951" y="681" width="5" height="19" fill="#00b888"/>
<rect x="957" y="681" width="5" height="19" fill="#00a068"/>
<rect x="963" y="681" width="5" height="19" fill="#008048"/>
<rect x="969" y="681" width="5" height="19" fill="#006030"/>
<rect x="795" y="701" width="5" height="12" fill="#f0ffeb"/>
<rect x="801" y="701" width="5" height="12" fill="#daedd3"/>
<rect x="807" y="701" width="5" height="12" fill="#c4dbbd"/>
<rect x="813" y="701" width="5" height="12" fill="#b0c9a7"/>
<rect x="819" y="701" width="5" height="12" fill="#9cb693"/>
<rect x="825" y="701" width="5" height="12" fill="#89a47f"/>
<rect x="831" y="701" width="5" height="12" fill="#76926d"/>
<rect x="837" y="701" width="5" height="12" fill="#65805c"/>
<rect x="843" y="701" width="5" height="12" fill="#546e4c"/>
<rect x="849" y="701" width="5" height="12" fill="#445c3d"/>
<rect x="855" y="701" width="5" height="12" fill="#e2ffd9"/>
<rect x="861" y="701" width="5" height="12" fill="#c9f0bd"/>
<rect x="867" y="701" width="5" height="12" fill="#b2e0a2"/>
<rect x="873" y="701" width="5" height="12" fill="#9cd18a"/>
<rect x="879" y="701" width="5" height="12" fill="#87c274"/>
<rect x="885" y="701" width="5" height="12" fill="#74b25f"/>
<rect x="891" y="701" width="5" height="12" fill="#62a34d"/>
<rect x="897" y="701" width="5" height="12" fill="#52943c"/>
<rect x="903" y="701" width="5" height="12" fill="#43852e"/>
<rect x="909" y="701" width="5" height="12" fill="#367521"/>
<rect x="915" y="701" width="5" height="12" fill="#e8ffd8"/>
<rect x="921" y="701" width="5" height="12" fill="#c0ffa0"/>
<rect x="927" y="701" width="5" height="12" fill="#98ff70"/>
<rect x="933" y="701" width="5" height="12" fill="#70f840"/>
<rect x="939" y="701" width="5" height="12" fill="#48f010"/>
<rect x="945" y="701" width="5" height="12" fill="#20e000"/>
<rect x="951" y="701" width="5" height="12" fill="#10c800"/>
<rect x="957" y="701" width="5" height="12" fill="#00a800"/>
<rect x="963" y="701" width="5" height="12" fill="#008800"/>
<rect x="969" y="701" width="5" height="12" fill="#006000"/>
<rect x="795" y="501" width="60" height="19.4" fill="#a6a6a6"/>
<rect x="797.4" y="503.4" width="56.4" height="15.4" fill="#bcbcbc"/>
<path d="M795.6 519.8H854.4V501.6" fill="none" stroke="#d2d2d2" stroke-width="1.2"/>
<rect x="914" y="501" width="1" height="19" fill="#e8e8e8"/>
<g class="ls" font-size="11"><text x="801" y="514.8" fill="#000">Fill</text><text x="861" y="514.8" fill="#fff">Border</text><text x="920.6" y="514.8" fill="#fff">Text</text></g>
<!-- ===== NAVIGATOR ===== -->
<rect x="795" y="717.5" width="126.5" height="101.2" fill="#fff"/>
<g transform="translate(794.1,685.84) scale(0.16116,0.162)">
<rect x="2" y="201" width="712" height="62" fill="url(#gHead)"/>
<rect x="2" y="263" width="712" height="8" fill="url(#gHead2)"/>
<rect x="608" y="204" width="82" height="56" fill="#b8b8b8"/>
<rect x="363" y="210" width="28" height="30" fill="#a8d0f8"/><rect x="393" y="210" width="28" height="30" fill="#f0f0f0" stroke="#999" stroke-width="5"/>
<rect x="428" y="210" width="80" height="30" fill="#f0f0f0" stroke="#888" stroke-width="6"/><rect x="516" y="210" width="80" height="30" fill="#f0f0f0" stroke="#000" stroke-width="7"/>
<rect x="132" y="285" width="61" height="20" fill="#f0f0f0" stroke="#000" stroke-width="6"/><rect x="132" y="319" width="61" height="20" fill="#f0f0f0" stroke="#000" stroke-width="6"/>
<rect x="428" y="281" width="90" height="20" fill="#f0f0f0" stroke="#000" stroke-width="6"/><rect x="428" y="304" width="90" height="21" fill="#f0f0f0" stroke="#000" stroke-width="6"/>
<rect x="527" y="284" width="12" height="16" fill="#000"/>
<rect x="264" y="284" width="40" height="40" fill="#c8c8c8" stroke="#000" stroke-width="6"/>
<path d="M213 294H264M264 312H233V394M304 303H362V514" fill="none" stroke="#000" stroke-width="6.5"/>
<path d="M224 324H244L234 343z" fill="#000"/>
<rect x="244" y="355" width="40" height="214" fill="#e0e0e0"/>
<rect x="278" y="355" width="18" height="212" fill="#000"/>
<path d="M156 363.5H112.5Q105.5 363.5 105.5 370.5V656M170 563.6H152Q145.3 563.6 145.3 570.5V656M250 543.5H446M482 543.5H527.5Q537.5 544.5 537.5 555.5V656" fill="none" stroke="#000" stroke-width="9"/>
<path d="M143.5 372A55 18 0 0 1 253.5 372V549A55 19.5 0 0 1 143.5 549z" fill="url(#gTankV)" stroke="#000" stroke-width="7"/>
<path d="M233 343V394" stroke="#000" stroke-width="7"/>
<path d="M254 430H280" stroke="#999" stroke-width="6"/>
<circle cx="364" cy="523.6" r="9.7" fill="#9cc4ee" stroke="#000" stroke-width="6"/><path d="M343.3 534V553.6L383.7 534V553.6z" fill="#9cc4ee" stroke="#000" stroke-width="6"/>
<rect x="344" y="559.6" width="39.6" height="19.7" fill="#f0f0f0" stroke="#000" stroke-width="6"/>
<circle cx="464" cy="544.6" r="19.3" fill="#9cc4ee" stroke="#000" stroke-width="7"/><path d="M464 530.2L477.8 552.4H450.6z" fill="#000"/>
<path d="M136.2 593.7H155.8L136.2 633.4H155.8z" fill="#000" stroke="#000" stroke-width="5"/>
<path d="M98.8 653.5H549A24.5 55 0 0 1 549 763.3H98.8A24.2 55 0 0 1 98.8 653.5z" fill="url(#gTankH)" stroke="#000" stroke-width="7"/>
<path d="M549 656V761" stroke="#000" stroke-width="5"/>
<rect x="377" y="358" width="309" height="136" fill="#4a4a4a"/>
<path d="M446.5 361V492.3M506.2 361V492.3M565.6 361V492.3M625.3 361V492.3M387.6 387.4H685.4M387.6 413.2H685.4M387.6 439.2H685.4M387.6 465.3H685.4" stroke="#808080" stroke-width="5" fill="none"/>
</g>
<path d="M795 717.9H921.4V818.6H795" fill="none" stroke="#000" stroke-width="1.1"/>
</svg>
<!-- window controls -->
<svg width="1005" height="865" viewBox="0 0 1005 865">
<g fill="none" stroke="#2e3436" stroke-width="2">
<path d="M897 29H905"/>
<rect x="932.2" y="23" width="5.8" height="5.8"/>
<path d="M965.8 22.6L972.8 29.6M972.8 22.6L965.8 29.6"/>
</g>
</svg>
</body>
</html>
